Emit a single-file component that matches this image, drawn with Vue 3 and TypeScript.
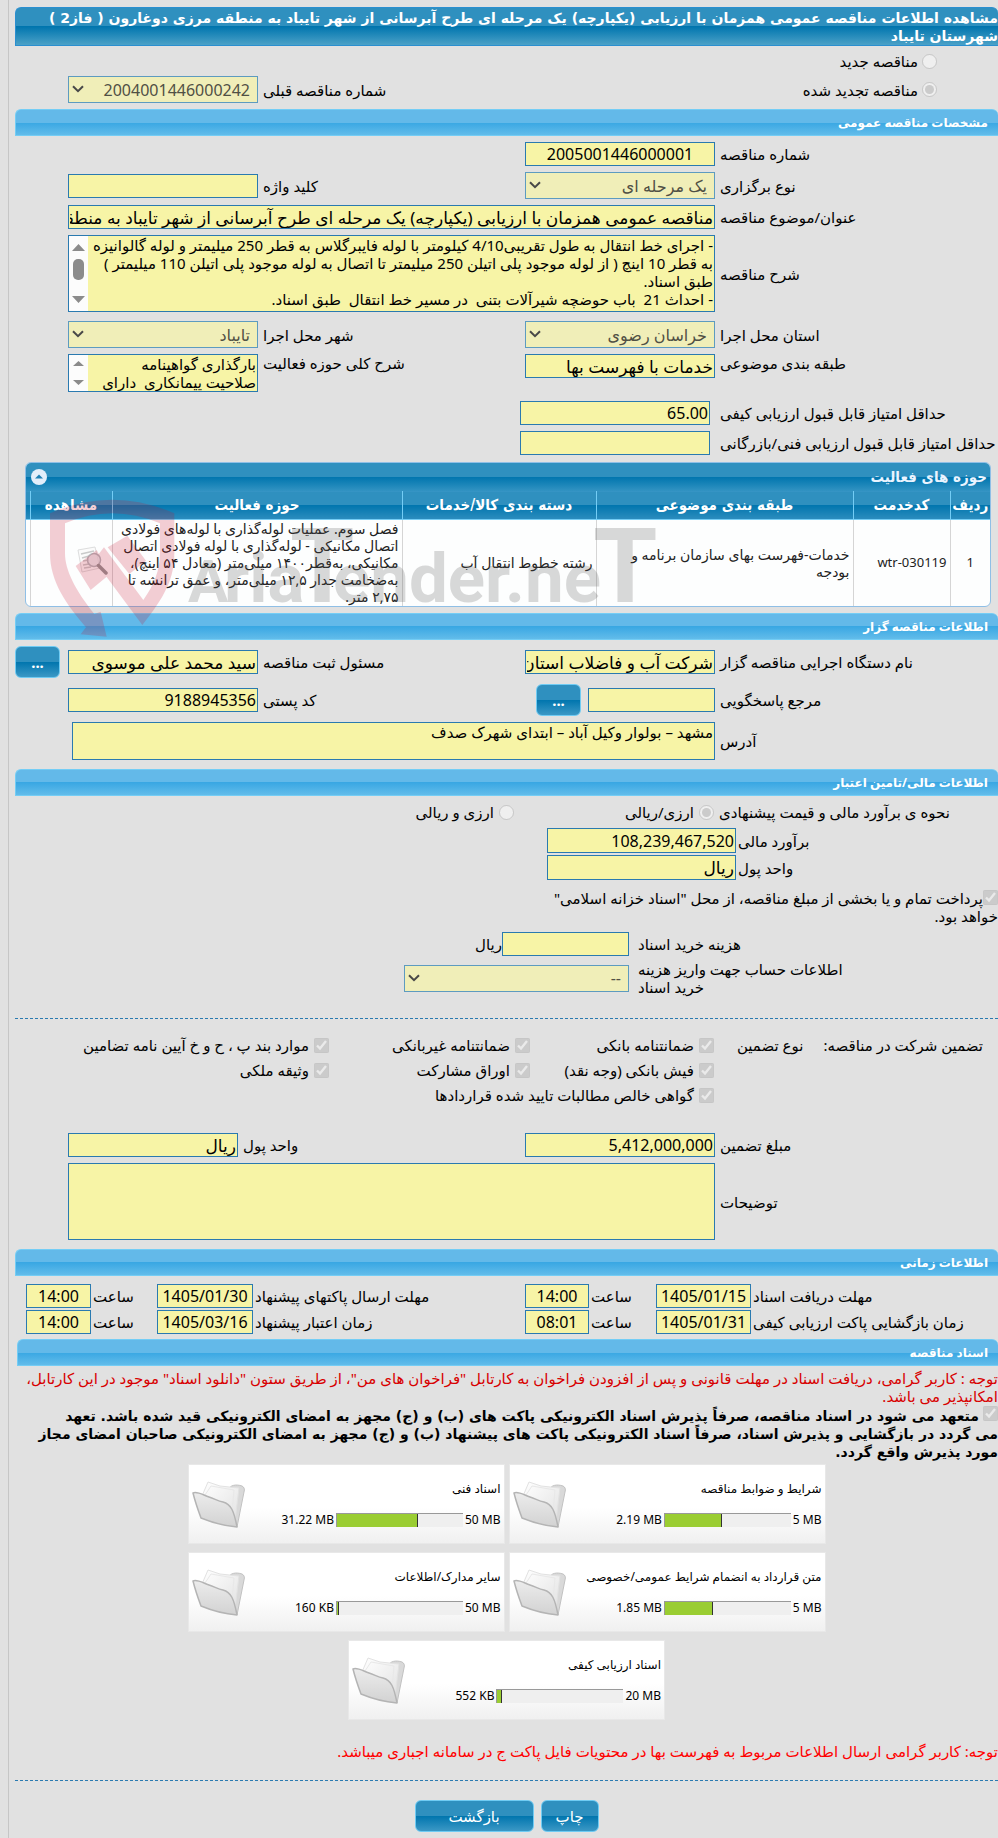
<script setup lang="ts">
interface DateItem { id: string; label: string; date: string; time: string }
interface DocCard { title: string; total: string; used: string; percent: number }
interface Guarantee { id: string; label: string; wide?: boolean }

const description = [
  '- اجرای خط انتقال به طول تقریبی4/10 کیلومتر با لوله فایبرگلاس به قطر 250 میلیمتر و لوله گالوانیزه',
  'به قطر 10 اینچ ( از لوله موجود پلی اتیلن 250 میلیمتر تا اتصال به لوله موجود پلی اتیلن 110 میلیمتر )',
  'طبق اسناد.',
  '- احداث 21  باب حوضچه شیرآلات بتنی  در مسیر خط انتقال  طبق اسناد.'
].join('\n')

const activity = ['بارگذاری گواهینامه', 'صلاحیت پیمانکاری  دارای'].join('\n')
const address = 'مشهد – بولوار وکیل آباد – ابتدای شهرک صدف'

const guarantees: Guarantee[] = [
  { id: 'g1', label: 'ضمانتنامه بانکی' },
  { id: 'g2', label: 'ضمانتنامه غیربانکی' },
  { id: 'g3', label: 'موارد بند پ ، ح و خ آیین نامه تضامین' },
  { id: 'g4', label: 'فیش بانکی (وجه نقد)' },
  { id: 'g5', label: 'اوراق مشارکت' },
  { id: 'g6', label: 'وثیقه ملکی' },
  { id: 'g7', label: 'گواهی خالص مطالبات تایید شده قراردادها', wide: true }
]

const dateRows: DateItem[][] = [
  [
    { id: 'd1', label: 'مهلت دریافت اسناد', date: '1405/01/15', time: '14:00' },
    { id: 'd2', label: 'مهلت ارسال پاکتهای پیشنهاد', date: '1405/01/30', time: '14:00' }
  ],
  [
    { id: 'd3', label: 'زمان بازگشایی پاکت ارزیابی کیفی', date: '1405/01/31', time: '08:01' },
    { id: 'd4', label: 'زمان اعتبار پیشنهاد', date: '1405/03/16', time: '14:00' }
  ]
]

const docs: DocCard[] = [
  { title: 'شرایط و ضوابط مناقصه', total: '5 MB', used: '2.19 MB', percent: 45 },
  { title: 'اسناد فنی', total: '50 MB', used: '31.22 MB', percent: 64 },
  { title: 'متن قرارداد به انضمام شرایط عمومی/خصوصی', total: '5 MB', used: '1.85 MB', percent: 38 },
  { title: 'سایر مدارک/اطلاعات', total: '50 MB', used: '160 KB', percent: 2 },
  { title: 'اسناد ارزیابی کیفی', total: '20 MB', used: '552 KB', percent: 4 }
]
</script>

<template>
  <main class="page" dir="rtl">
    <h1 class="title">مشاهده اطلاعات مناقصه عمومی همزمان با ارزیابی (یکپارچه) یک مرحله ای طرح آبرسانی از شهر تایباد به منطقه مرزی دوغارون ( فاز2 )<br>شهرستان تایباد</h1>

    <div class="kind first">
      <input id="k1" type="radio" name="kind" disabled><label for="k1">مناقصه جدید</label>
    </div>
    <div class="row">
      <div class="kind">
        <input id="k2" type="radio" name="kind" disabled checked><label for="k2">مناقصه تجدید شده</label>
      </div>
      <span></span>
      <label class="lbl" for="prev">شماره مناقصه قبلی</label>
      <div class="select">
        <select id="prev" disabled><option>2004001446000242</option></select>
        <svg class="chev" viewBox="0 0 12 8" aria-hidden="true"><path d="M1 1.2 6 6.2 11 1.2" /></svg>
      </div>
    </div>

    <h2 class="bar">مشخصات مناقصه عمومی</h2>
    <div class="row">
      <label class="lbl" for="no">شماره مناقصه</label>
      <input id="no" class="fld mid" readonly value="2005001446000001">
    </div>
    <div class="row gap">
      <label class="lbl" for="type">نوع برگزاری</label>
      <div class="select">
        <select id="type" disabled><option>یک مرحله ای</option></select>
        <svg class="chev" viewBox="0 0 12 8" aria-hidden="true"><path d="M1 1.2 6 6.2 11 1.2" /></svg>
      </div>
      <label class="lbl" for="kw">کلید واژه</label>
      <input id="kw" class="fld" readonly>
    </div>
    <div class="row gap">
      <label class="lbl" for="subject">عنوان/موضوع مناقصه</label>
      <input id="subject" class="fld txt span" readonly value="مناقصه عمومی همزمان با ارزیابی (یکپارچه) یک مرحله ای طرح آبرسانی از شهر تایباد به منطقه مرزی دوغارون ( فاز2 ) شهرستان تایباد">
    </div>
    <div class="row gap">
      <label class="lbl" for="desc">شرح مناقصه</label>
      <div class="area tall span">
        <textarea id="desc" readonly :value="description"></textarea>
        <svg class="scroll" viewBox="0 0 19 75" aria-hidden="true">
          <rect width="19" height="75" fill="#fcfcfc" />
          <path d="M3 15 9.500 8 16 15Z M3 60h13l-6.500 7Z" fill="#8b8b8b" />
          <rect x="4" y="23" width="11" height="21" rx="5" fill="#8b8b8b" />
        </svg>
      </div>
    </div>
    <div class="row more">
      <label class="lbl" for="prov">استان محل اجرا</label>
      <div class="select">
        <select id="prov" disabled><option>خراسان رضوی</option></select>
        <svg class="chev" viewBox="0 0 12 8" aria-hidden="true"><path d="M1 1.2 6 6.2 11 1.2" /></svg>
      </div>
      <label class="lbl" for="city">شهر محل اجرا</label>
      <div class="select">
        <select id="city" disabled><option>تایباد</option></select>
        <svg class="chev" viewBox="0 0 12 8" aria-hidden="true"><path d="M1 1.2 6 6.2 11 1.2" /></svg>
      </div>
    </div>
    <div class="row gap top">
      <label class="lbl" for="cat">طبقه بندی موضوعی</label>
      <input id="cat" class="fld txt" readonly value="خدمات با فهرست بها">
      <label class="lbl" for="act">شرح کلی حوزه فعالیت</label>
      <div class="area short">
        <textarea id="act" readonly :value="activity"></textarea>
        <svg class="scroll" viewBox="0 0 19 36" aria-hidden="true">
          <rect width="19" height="36" fill="#fcfcfc" />
          <path d="M4 11 9.500 6 15 11Z M4 25h11l-5.500 5Z" fill="#8b8b8b" />
        </svg>
      </div>
    </div>
    <div class="row more">
      <label class="lbl" for="q1">حداقل امتیاز قابل قبول ارزیابی کیفی</label>
      <input id="q1" class="fld inset" readonly value="65.00">
    </div>
    <div class="row gap">
      <label class="lbl" for="q2">حداقل امتیاز قابل قبول ارزیابی فنی/بازرگانی</label>
      <input id="q2" class="fld inset" readonly>
    </div>

    <section class="grid-box">
      <div class="grid-head">
        <h3>حوزه های فعالیت</h3>
        <button type="button" class="fold" aria-label="بستن">
          <svg viewBox="0 0 16 16" aria-hidden="true"><circle cx="8" cy="8" r="8" fill="#e3eefa" /><path d="M4 9.500 8 5.500 12 9.500Z" fill="#2080b4" /></svg>
        </button>
      </div>
      <table>
        <colgroup><col class="c1"><col class="c2"><col class="c3"><col class="c4"><col class="c5"><col class="c6"><col class="c7"></colgroup>
        <thead>
          <tr><th>ردیف</th><th>کدخدمت</th><th>طبقه بندی موضوعی</th><th>دسته بندی کالا/خدمات</th><th>حوزه فعالیت</th><th>مشاهده</th><th></th></tr>
        </thead>
        <tbody>
          <tr>
            <td class="center code">1</td>
            <td class="code">wtr-030119</td>
            <td>خدمات-فهرست بهای سازمان برنامه و<br>بودجه</td>
            <td>رشته خطوط انتقال آب</td>
            <td>فصل سوم. عملیات لوله‌گذاری با لوله‌های فولادی<br>اتصال مکانیکی - لوله‌گذاری با لوله فولادی اتصال<br>مکانیکی، به‌قطر۱۴۰۰ میلی‌متر (معادل ۵۴ اینچ)،<br>به‌ضخامت جدار ۱۲,۵ میلی‌متر، و عمق ترانشه تا<br>۲,۷۵ متر.</td>
            <td class="center view">
              <svg class="doc" viewBox="0 0 32 30" aria-hidden="true">
                <path d="M1 4 18 1 23 22 5 26Z" fill="#fafafa" stroke="#c8c8c8" />
                <path d="M4 8 17 5M5 12 12 10M6 15 12 14M6 19 12 18M7 22 14 21" stroke="#a8a8a8" fill="none" stroke-width="1.500" />
                <circle cx="17" cy="14" r="6.500" fill="#d9dde2" fill-opacity=".7" stroke="#8a8f96" stroke-width="1.500" />
                <path d="M21.500 19.500 29 27" stroke="#555" stroke-width="3.500" stroke-linecap="round" />
              </svg>
            </td>
            <td></td>
          </tr>
        </tbody>
      </table>
      <svg class="mark" viewBox="0 0 620 160" aria-hidden="true">
        <g transform="scale(.3333)" fill="#c8102e" opacity=".2">
          <path d="M0 70 Q187 -12 373 70 V190 C373 265 345 320 277 405 L132 210 162 172 280 330 C312 285 330 240 330 190 V100 Q187 40 45 100 V190 C45 240 75 300 133 372 L152 365 170 440 92 433 108 412 C50 345 0 275 0 190Z" />
          <path d="M173 172 232 137 288 212 238 252Z M77 228 140 180 180 252 122 300Z" />
        </g>
        <g fill="#555" opacity=".22">
          <text x="138" y="112" class="m-cap-small">A</text>
          <text x="174" y="112" class="m-low">ria</text>
          <text x="240" y="112" class="m-cap">T</text>
          <text x="283" y="112" class="m-low">ender.ne</text>
          <text x="543" y="112" class="m-cap">T</text>
        </g>
      </svg>
    </section>

    <h2 class="bar">اطلاعات مناقصه گزار</h2>
    <div class="row">
      <label class="lbl" for="org">نام دستگاه اجرایی مناقصه گزار</label>
      <input id="org" class="fld txt" readonly value="شرکت آب و فاضلاب استان">
      <label class="lbl" for="reg">مسئول ثبت مناقصه</label>
      <input id="reg" class="fld txt" readonly value="سید محمد علی موسوی">
      <button type="button" class="btn dots end">...</button>
    </div>
    <div class="row gap">
      <label class="lbl" for="ref">مرجع پاسخگویی</label>
      <div class="pair">
        <input id="ref" class="fld w-ref" readonly>
        <button type="button" class="btn dots">...</button>
      </div>
      <label class="lbl" for="post">کد پستی</label>
      <input id="post" class="fld" readonly value="9188945356">
    </div>
    <div class="row gap">
      <label class="lbl" for="addr">آدرس</label>
      <div class="area short span addr"><textarea id="addr" readonly :value="address"></textarea></div>
    </div>

    <h2 class="bar far">اطلاعات مالی/تامین اعتبار</h2>
    <div class="row cur">
      <span class="lbl">نحوه ی برآورد مالی و قیمت پیشنهادی</span>
      <div class="opt"><input id="c1" type="radio" name="cur" disabled checked><label for="c1">ارزی/ریالی</label></div>
      <div class="opt"><input id="c2" type="radio" name="cur" disabled><label for="c2">ارزی و ریالی</label></div>
    </div>
    <div class="row money gap">
      <label class="lbl" for="est">برآورد مالی</label>
      <input id="est" class="fld" readonly value="108,239,467,520">
    </div>
    <div class="row money tight">
      <label class="lbl" for="unit">واحد پول</label>
      <input id="unit" class="fld txt" readonly value="ریال">
    </div>
    <p class="treasury">
      <input id="tr" type="checkbox" disabled checked><label for="tr">پرداخت تمام و یا بخشی از مبلغ مناقصه، از محل "اسناد خزانه اسلامی"<br>خواهد بود.</label>
    </p>
    <div class="row cost">
      <label class="lbl" for="cost">هزینه خرید اسناد</label>
      <div class="pair near"><input id="cost" class="fld w-ref" readonly><span>ریال</span></div>
    </div>
    <div class="row cost close">
      <label class="lbl" for="acc">اطلاعات حساب جهت واریز هزینه<br>خرید اسناد</label>
      <div class="select">
        <select id="acc" disabled><option>--</option></select>
        <svg class="chev" viewBox="0 0 12 8" aria-hidden="true"><path d="M1 1.2 6 6.2 11 1.2" /></svg>
      </div>
    </div>
    <hr class="dash">

    <div class="guar">
      <div class="guar-lead"><span>تضمین شرکت در مناقصه:</span><span>نوع تضمین</span></div>
      <div class="guar-grid">
        <div v-for="g in guarantees" :key="g.id" class="opt" :class="{ wide: g.wide }">
          <input :id="g.id" type="checkbox" disabled checked><label :for="g.id">{{ g.label }}</label>
        </div>
      </div>
    </div>
    <div class="row amount">
      <label class="lbl" for="amt">مبلغ تضمین</label>
      <input id="amt" class="fld" readonly value="5,412,000,000">
      <label class="lbl" for="unit2">واحد پول</label>
      <input id="unit2" class="fld txt" readonly value="ریال">
    </div>
    <div class="row gap">
      <label class="lbl" for="note">توضیحات</label>
      <div class="area tall span"><textarea id="note" readonly></textarea></div>
    </div>

    <h2 class="bar far">اطلاعات زمانی</h2>
    <div v-for="(r, i) in dateRows" :key="i" class="dates">
      <template v-for="d in r" :key="d.id">
        <label class="lbl" :for="d.id">{{ d.label }}</label>
        <input :id="d.id" class="fld mid" readonly :value="d.date">
        <label class="lbl" :for="d.id + 't'">ساعت</label>
        <input :id="d.id + 't'" class="fld mid" readonly :value="d.time">
      </template>
    </div>

    <h2 class="bar docs-bar">اسناد مناقصه</h2>
    <p class="warn">توجه : کاربر گرامی، دریافت اسناد در مهلت قانونی و پس از افزودن فراخوان به کارتابل "فراخوان های من"، از طریق ستون "دانلود اسناد" موجود در این کارتابل،<br>امکانپذیر می باشد.</p>
    <p class="commit">
      <input id="cm" type="checkbox" disabled checked>
      <label for="cm">متعهد می شود در اسناد مناقصه، صرفاً پذیرش اسناد الکترونیکی پاکت های (ب) و (ج) مجهز به امضای الکترونیکی قید شده باشد. تعهد<br>می گردد در بازگشایی و پذیرش اسناد، صرفاً اسناد الکترونیکی پاکت های پیشنهاد (ب) و (ج) مجهز به امضای الکترونیکی صاحبان امضای مجاز<br>مورد پذیرش واقع گردد.</label>
    </p>

    <div class="cards">
      <article v-for="c in docs" :key="c.title" class="card">
        <h4>{{ c.title }}</h4>
        <div class="usage">
          <span>{{ c.used }}</span>
          <div class="meter"><div class="fill" :style="{ width: c.percent + '%' }"></div></div>
          <span>{{ c.total }}</span>
        </div>
        <svg class="folder" viewBox="0 0 54 50" aria-hidden="true">
          <defs>
            <linearGradient id="ff" x1="0" y1="0" x2="0" y2="1"><stop offset="0" stop-color="#ececec" /><stop offset="1" stop-color="#d2d2d2" /></linearGradient>
            <linearGradient id="fp" x1="0" y1="0" x2="1" y2="1"><stop offset="0" stop-color="#fff" /><stop offset="1" stop-color="#e2e2e2" /></linearGradient>
          </defs>
          <path d="M36 9C38 4 44 3 50 5 52 6 53 8 52 11L45 46 40 40Z" fill="#d9d9d9" stroke="#c2c2c2" />
          <path d="M10 15 16 1 28 5 47 7 43 40 20 36Z" fill="url(#fp)" stroke="#e2e2e2" />
          <path d="M13 14 19 5 42 9 40 32" fill="none" stroke="#e8e8e8" />
          <path d="M1 12C5 10 11 14 17 16 23 18 26 20 31 21 39 23 42 30 45 46 34 45 21 42 9 37 6 29 3 20 1 12Z" fill="url(#ff)" stroke="#b4b4b4" stroke-width="1.500" stroke-linejoin="round" />
        </svg>
      </article>
    </div>

    <p class="warn bright">توجه: کاربر گرامی ارسال اطلاعات مربوط به فهرست بها در محتویات فایل پاکت ج در سامانه اجباری میباشد.</p>
    <hr class="dash low">
    <div class="actions">
      <button type="button" class="btn print">چاپ</button>
      <button type="button" class="btn back">بازگشت</button>
    </div>
  </main>
</template>

<style>
body { margin: 0; background: #e1e1e1; }
</style>

<style scoped>
.page {
  margin-left: 8px;
  padding: 7px 0 6px 6px;
  border-left: 1px solid #c6c6c6;
  background: #e1e1e1;
  color: #000;
  font: 15px/18px "Noto Sans", "DejaVu Sans", sans-serif;
  overflow-x: hidden;
}
* { box-sizing: border-box; }
h1, h2, h3, h4, p { margin: 0; }
input, select, textarea, button { font-family: inherit; margin: 0; }

.title {
  height: 39px;
  padding: 1px 0;
  font: 700 14px/18px "DejaVu Sans", sans-serif;
  color: #fff;
  white-space: nowrap;
  border: solid #2a8fd0;
  border-width: 1px 0 1px 1px;
  border-radius: 6px 6px 0 0;
  background: linear-gradient(#2f90bf 50%, #0075ae 50%, #4ba1c7);
}
.bar {
  height: 27px;
  margin: 6px 0;
  padding: 0 10px 0 0;
  font-size: 12px;
  line-height: 25px;
  color: #fff;
  border: solid #74cdf5;
  border-width: 1px 0 1px 1px;
  border-radius: 6px 6px 0 0;
  background: linear-gradient(#63b9e9 50%, #39a7e3 50%, #62bcea);
}
.bar.far { margin-top: 9px; }

.row {
  display: grid;
  grid-template-columns: 283px 190px 1fr 190px 53px;
  align-items: center;
}
.row.top { align-items: start; }
.gap { margin-top: 6px; }
.more { margin-top: 9px; }
.tight { margin-top: 2px; }
.close { margin-top: 4px; }
.span { grid-column: 2 / span 3; }
.lbl { padding-left: 5px; text-align: left; white-space: nowrap; }

.kind { display: flex; align-items: center; gap: 4px; padding-right: 61px; }
.kind.first { height: 30px; }
input[type=radio], input[type=checkbox] { width: 15px; height: 15px; flex: none; }

.fld {
  width: 100%;
  min-width: 0;
  height: 24px;
  padding: 0 1px;
  border: 1px solid #2a7ab0;
  background: #f7f4a6;
  color: #000;
  font-size: 16px;
  outline: 0;
}
.txt { font-size: 17px; }
.mid { text-align: center; }
.inset { position: relative; right: 5px; }

.select { position: relative; height: 27px; }
.select select {
  appearance: none;
  width: 100%;
  height: 100%;
  padding: 0 7px;
  border: 1px solid #5d9bc0;
  border-radius: 0;
  background: #f0eeb8;
  color: #505045;
  font-size: 16px;
  opacity: 1;
}
.chev { position: absolute; left: 4px; top: 9px; width: 12px; height: 8px; fill: none; stroke: #484848; stroke-width: 2; }

.area { display: flex; border: 1px solid #2a7ab0; background: #f7f4a6; }
.area.tall { height: 77px; }
.area.short { height: 38px; }
.area.addr { margin-left: 4px; }
.area textarea {
  flex: 1;
  min-width: 0;
  padding: 0 1px;
  border: 0;
  outline: 0;
  resize: none;
  overflow: hidden;
  background: transparent;
  color: #000;
  font-size: 15px;
  line-height: 18px;
  white-space: pre;
}
.scroll { flex: none; width: 19px; height: 100%; }

.grid-box {
  position: relative;
  margin: 7px 7px 0 10px;
  border: 1px solid #8fbfe6;
  border-radius: 6px;
  background: #fdfefe;
}
.grid-head {
  display: flex;
  justify-content: space-between;
  align-items: center;
  height: 28px;
  padding: 0 3px 0 5px;
  color: #eaf4ff;
  border-radius: 5px 5px 0 0;
  background: linear-gradient(#2f90bf 50%, #0075ae 50%, #3293c2);
}
.grid-head h3 { font: 700 15px/18px "DejaVu Sans Condensed", "DejaVu Sans", sans-serif; }
.fold { width: 16px; height: 16px; padding: 0; border: 0; background: none; }
.fold svg { display: block; }
table { width: 100%; border-collapse: collapse; table-layout: fixed; }
.c1 { width: 40px; }
.c2 { width: 97px; }
.c3 { width: 257px; }
.c4 { width: 194px; }
.c6 { width: 82px; }
.c7 { width: 4px; }
th {
  height: 28px;
  padding: 0;
  font: 700 15px/18px "DejaVu Sans Condensed", "DejaVu Sans", sans-serif;
  color: #fff;
  white-space: nowrap;
  border-left: 1px solid #74cdf5;
  border-bottom: 1px solid #74cdf5;
  background: linear-gradient(#3a97c8 0, #2f90bf 4%, #2f90bf 50%, #0075ae 50%, #2b8cbd);
}
td {
  height: 87px;
  padding: 0 3px;
  font-size: 14px;
  line-height: 17px;
  color: #222;
  white-space: nowrap;
  border-left: 1px solid #d5d5d5;
}
.code { font-size: 13px; }
th:last-child, td:last-child { border-left: 0; }
.center { text-align: center; }
.view { padding-left: 40px; }
.view { padding: 0 3px 0 3px; text-align: right; }
.doc { width: 32px; height: 30px; opacity: .6; }
.mark { position: absolute; left: 24px; top: 27px; width: 620px; height: 160px; direction: ltr; pointer-events: none; z-index: 1; }
.m-low { font: 700 69px Roboto, sans-serif; }
.m-cap { font: 700 104px Roboto, sans-serif; }
.m-cap-small { font: 700 60px Roboto, sans-serif; }

.btn {
  height: 32px;
  padding: 0;
  border: 1px solid #6fcbf3;
  border-radius: 6px;
  background: linear-gradient(#2f90bf 50%, #0075ae 50%, #3b98c5);
  color: #fff;
  font-size: 15px;
}
.dots { width: 45px; flex: none; font-weight: 700; }
.end { justify-self: end; }
.pair { display: flex; align-items: center; gap: 7px; }
.pair.near { gap: 0; }
.w-ref { width: 127px; flex: none; }

.opt { display: flex; align-items: center; gap: 5px; white-space: nowrap; }
.cur { height: 20px; grid-template-columns: 284px 200px 1fr; }
.money { grid-template-columns: 262px 189px 1fr; }
.money .lbl { padding-left: 2px; }
.money .fld { height: 25px; }
.treasury { margin: 9px 0 7px; white-space: nowrap; }
.treasury input { vertical-align: -1px; }
.cost { grid-template-columns: 369px 225px 1fr; }
.cost .lbl { padding-left: 9px; }
.dash { margin: 22px 0 14px; border: 0; border-top: 1px dashed #2a7ab0; }

.guar { display: flex; align-items: start; line-height: 25px; }
.guar-lead { display: flex; gap: 20px; width: 284px; flex: none; padding-right: 15px; white-space: nowrap; }
.guar-grid { display: grid; grid-template-columns: 184px 201px 1fr; flex: 1; }
.wide { grid-column: span 2; }
.amount { margin-top: 25px; grid-template-columns: 283px 190px 1fr 170px 53px; }

.dates {
  display: grid;
  grid-template-columns: 247px 95px 67px 64px 1fr 96px 66px 65px;
  align-items: center;
  margin: 2px 0 0 11px;
}
.bar + .dates { margin-top: 8px; }
.dates .lbl { padding-left: 2px; }
.docs-bar { margin: 5px 0 3px 2px; }

.warn { color: #d80000; white-space: nowrap; }
.commit {
  margin-top: 1px;
  font: 700 14px/18px "DejaVu Sans", sans-serif;
  white-space: nowrap;
}
.commit input { margin-left: 4px; vertical-align: 0; }
.bright { margin-top: 22px; color: #f00; }

.cards { display: flex; flex-wrap: wrap; justify-content: center; gap: 8px 4px; padding: 3px 150px 0; }
.card {
  position: relative;
  width: 317px;
  height: 80px;
  padding: 15px 3px 0;
  border: 1px solid #e8e8e8;
  background: linear-gradient(#fff 55%, #f0f0f0);
}
.card h4 { font-size: 12px; font-weight: 400; line-height: 18px; }
.usage { display: flex; direction: ltr; justify-content: flex-end; align-items: center; gap: 2px; margin-top: 13px; font-size: 12px; line-height: 18px; }
.meter { width: 127px; height: 14px; border: solid #999; border-width: 1px 0 0 1px; background: #efefef; }
.fill { height: 100%; border-right: 1px solid #333; background: #9acd32; }
.folder { position: absolute; left: 3px; top: 16px; width: 54px; height: 50px; }

.low { margin: 20px 0 19px; }
.actions { display: flex; justify-content: center; gap: 7px; }
.print { width: 58px; }
.back { width: 119px; }
</style>
